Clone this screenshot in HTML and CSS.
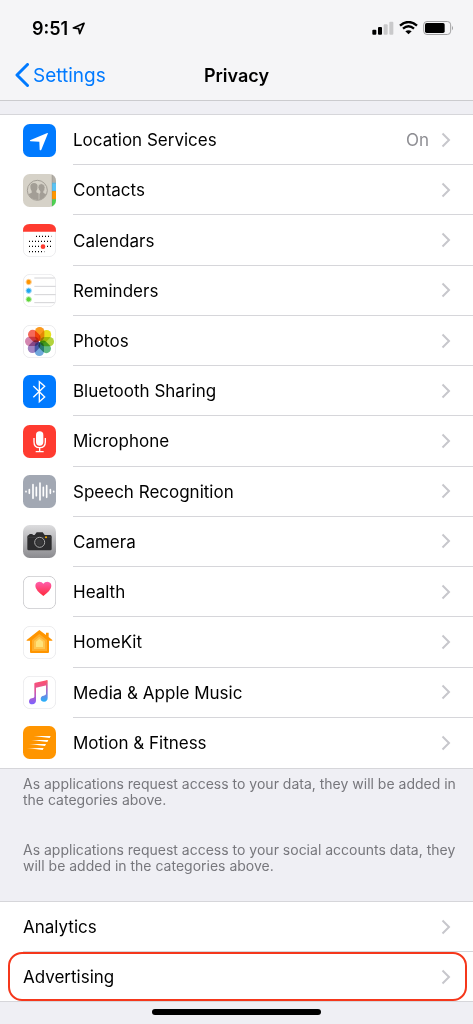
FILE: index.html
```html
<!DOCTYPE html>
<html lang="en">
<head>
    <meta charset="UTF-8">
    <meta name="viewport" content="width=device-width, initial-scale=1.0">
    <title>Privacy</title>
    <link rel="stylesheet" href="styles.css">
</head>
<body>
    <!-- Shared chevron -->
    <svg class="defs" width="0" height="0" aria-hidden="true">
        <symbol id="chevron" viewBox="0 0 10 16">
            <path d="M1.500 1.500 8 8l-6.500 6.500" fill="none" stroke="#c7c7cc" stroke-width="2"/>
        </symbol>
    </svg>

    <header class="top">
        <div class="status">
            <span class="time">9:51</span>
            <svg class="locate" width="13" height="13" viewBox="0 0 39 39" aria-hidden="true">
                <path d="M36 4 4 18l16 2 3 15z" fill="none" stroke="#000" stroke-width="5" stroke-linejoin="round"/>
            </svg>
            <svg class="signal" width="22" height="14" viewBox="0 0 66 42" aria-hidden="true">
                <rect x="1" y="26" width="12" height="15" rx="3"/>
                <rect x="18" y="18" width="12" height="23" rx="3"/>
                <rect x="35" y="10" width="12" height="31" rx="3" fill="#c9c9cb"/>
                <rect x="52" y="2" width="12" height="39" rx="3" fill="#c9c9cb"/>
            </svg>
            <svg class="wifi" width="19" height="14" viewBox="0 0 57 42" aria-hidden="true">
                <path d="M3 14q25.500-22 51 0M12 23q16.500-14 33 0" fill="none" stroke="#000" stroke-width="7"/>
                <path d="M19 31q9.500-7 19 0l-9.500 9z"/>
            </svg>
            <svg class="battery" width="31" height="14" viewBox="0 0 93 42" aria-hidden="true">
                <rect x="2" y="1.500" width="81" height="39" rx="10" fill="none" stroke="#a0a0a2" stroke-width="3"/>
                <rect x="6" y="6" width="59" height="30" rx="5"/>
                <path d="M87 14q6 7 0 14z" fill="#a0a0a2"/>
            </svg>
        </div>
        <nav class="bar">
            <a class="back" href="#">
                <svg width="14" height="24" viewBox="0 0 14 24" aria-hidden="true">
                    <path d="M12.500 1.500 2 12l10.500 10.500" fill="none" stroke="#007aff" stroke-width="3" stroke-linecap="round" stroke-linejoin="round"/>
                </svg>
                Settings
            </a>
            <h1>Privacy</h1>
        </nav>
    </header>

    <main>
        <section class="group group-access">
            <a class="row" href="#">
                <svg class="icon" viewBox="0 0 99 99" aria-hidden="true">
                    <rect width="99" height="99" rx="20" fill="#007aff"/>
                    <path d="M73 27 21 49q-1 3 2 3l26 1 1 24q2 4 5 0l20-49z" fill="#fff"/>
                </svg>
                <span class="cell"><span class="label">Location Services</span><span class="value">On</span><svg class="chevron"><use href="#chevron"/></svg></span>
            </a>
            <a class="row" href="#">
                <svg class="icon" viewBox="0 0 99 99" aria-hidden="true">
                    <clipPath id="tile"><rect width="99" height="99" rx="20"/></clipPath>
                    <g clip-path="url(#tile)">
                        <rect width="99" height="99" fill="#d6d2c8"/>
                        <rect x="87" width="12" height="26" fill="#b3afa8"/>
                        <rect x="87" y="26" width="12" height="25" fill="#5ac3f5"/>
                        <rect x="87" y="51" width="12" height="25" fill="#ff9500"/>
                        <rect x="87" y="76" width="12" height="23" fill="#4cd351"/>
                        <path d="M87 0v99M87 27h12M87 51h12M87 76h12" stroke="#6d6a60" stroke-width="2" opacity=".4"/>
                    </g>
                    <clipPath id="face"><circle cx="43" cy="49" r="29"/></clipPath>
                    <g clip-path="url(#face)" fill="#a39e96">
                        <path d="M22 38q0-11 11-11t11 11q0 8-4 13v4l14 7v20H8V64l18-8v-5q-4-4-4-13z"/>
                        <path d="M45 40q0-11 10-11t11 11q0 8-4 12v4l17 8v17H48V60l3-4v-4q-5-5-6-12z" stroke="#d6d2c8" stroke-width="2"/>
                    </g>
                    <circle cx="43" cy="49" r="30" fill="none" stroke="#a39e96" stroke-width="3"/>
                </svg>
                <span class="cell"><span class="label">Contacts</span><svg class="chevron"><use href="#chevron"/></svg></span>
            </a>
            <a class="row" href="#">
                <svg class="icon" viewBox="0 0 99 99" aria-hidden="true">
                    <rect x="1" y="1" width="97" height="97" rx="20" fill="#fff" stroke="#e3e3e5" stroke-width="2"/>
                    <path d="M0 23v-3Q0 0 20 0h59q20 0 20 20v3z" fill="#ff3b30"/>
                    <path d="M39 37h46M18 52h67M18 67h67M18 83h46" stroke="#000" stroke-width="4" stroke-dasharray="3 6"/>
                    <circle cx="60" cy="68" r="7" fill="#ff3b30"/>
                </svg>
                <span class="cell"><span class="label">Calendars</span><svg class="chevron"><use href="#chevron"/></svg></span>
            </a>
            <a class="row" href="#">
                <svg class="icon" viewBox="0 0 99 99" aria-hidden="true">
                    <rect x="1" y="1" width="97" height="97" rx="20" fill="#fff" stroke="#e3e3e5" stroke-width="2"/>
                    <path d="M34 12h61M34 37h64M34 62h64M34 86h61" stroke="#d2d2d5" stroke-width="3"/>
                    <g stroke-width="3">
                        <circle cx="17" cy="24" r="8" fill="#ff9500" stroke="#ffd49b"/>
                        <circle cx="17" cy="50" r="8" fill="#1ea7f0" stroke="#a8dcf8"/>
                        <circle cx="17" cy="76" r="8" fill="#5fd53a" stroke="#c0efae"/>
                    </g>
                </svg>
                <span class="cell"><span class="label">Reminders</span><svg class="chevron"><use href="#chevron"/></svg></span>
            </a>
            <a class="row" href="#">
                <svg class="icon" viewBox="0 0 99 99" aria-hidden="true">
                    <rect x="1" y="1" width="97" height="97" rx="20" fill="#fff" stroke="#e3e3e5" stroke-width="2"/>
                    <g class="petals">
                        <rect x="36" y="6" width="28" height="42" rx="14" fill="#fb9a1f"/>
                        <rect x="36" y="6" width="28" height="42" rx="14" fill="#e9e01c" transform="rotate(45 49.500 49.500)"/>
                        <rect x="36" y="6" width="28" height="42" rx="14" fill="#b2d33c" transform="rotate(90 49.500 49.500)"/>
                        <rect x="36" y="6" width="28" height="42" rx="14" fill="#5fba83" transform="rotate(135 49.500 49.500)"/>
                        <rect x="36" y="6" width="28" height="42" rx="14" fill="#70a8dc" transform="rotate(180 49.500 49.500)"/>
                        <rect x="36" y="6" width="28" height="42" rx="14" fill="#a184c2" transform="rotate(225 49.500 49.500)"/>
                        <rect x="36" y="6" width="28" height="42" rx="14" fill="#d386b0" transform="rotate(270 49.500 49.500)"/>
                        <rect x="36" y="6" width="28" height="42" rx="14" fill="#f5695a" transform="rotate(315 49.500 49.500)"/>
                    </g>
                </svg>
                <span class="cell"><span class="label">Photos</span><svg class="chevron"><use href="#chevron"/></svg></span>
            </a>
            <a class="row" href="#">
                <svg class="icon" viewBox="0 0 99 99" aria-hidden="true">
                    <rect width="99" height="99" rx="20" fill="#007aff"/>
                    <path d="M31 33 65 66 49 80V20l16 14-34 33" fill="none" stroke="#fff" stroke-width="4"/>
                </svg>
                <span class="cell"><span class="label">Bluetooth Sharing</span><svg class="chevron"><use href="#chevron"/></svg></span>
            </a>
            <a class="row" href="#">
                <svg class="icon" viewBox="0 0 99 99" aria-hidden="true">
                    <rect width="99" height="99" rx="20" fill="#ff3b30"/>
                    <rect x="39" y="19" width="22" height="43" rx="11" fill="#fff"/>
                    <path d="M33 39v12q0 17 17 17t17-17V39M50 68v11M38 80h24" fill="none" stroke="#fff" stroke-width="4"/>
                </svg>
                <span class="cell"><span class="label">Microphone</span><svg class="chevron"><use href="#chevron"/></svg></span>
            </a>
            <a class="row" href="#">
                <svg class="icon" viewBox="0 0 99 99" aria-hidden="true">
                    <rect width="99" height="99" rx="20" fill="#a2a8b3"/>
                    <path d="M9 49v1M19 44v11M30 29v41M40 37v25M51 24v51M61 37v25M71 32v35M82 44v11M92 49v1" stroke="#fff" stroke-width="5" stroke-linecap="round"/>
                </svg>
                <span class="cell"><span class="label">Speech Recognition</span><svg class="chevron"><use href="#chevron"/></svg></span>
            </a>
            <a class="row" href="#">
                <svg class="icon" viewBox="0 0 99 99" aria-hidden="true">
                    <linearGradient id="steel" x2="0" y2="1"><stop stop-color="#dcdcde"/><stop offset="1" stop-color="#8b8b8f"/></linearGradient>
                    <rect width="99" height="99" rx="20" fill="url(#steel)"/>
                    <path d="M13 35q0-4 5-5l2-3h8l2 3h5l6-8h18l6 8h17q4 1 4 5v37q0 4-4 4H17q-4 0-4-4z" fill="#2c2c2e"/>
                    <path d="M13 37h73" stroke="#48484a" stroke-width="2"/>
                    <circle cx="50" cy="52" r="15" fill="#2c2c2e" stroke="#aaa" stroke-width="3"/>
                    <circle cx="50" cy="52" r="10" fill="#38383a"/>
                    <circle cx="69" cy="37" r="3" fill="#ffb300"/>
                </svg>
                <span class="cell"><span class="label">Camera</span><svg class="chevron"><use href="#chevron"/></svg></span>
            </a>
            <a class="row" href="#">
                <svg class="icon" viewBox="0 0 99 99" aria-hidden="true">
                    <linearGradient id="pink" x2="0" y2="1"><stop stop-color="#ff5fae"/><stop offset="1" stop-color="#ff2a3c"/></linearGradient>
                    <rect x="1" y="1" width="97" height="97" rx="20" fill="#fff" stroke="#cfcfd2" stroke-width="3"/>
                    <path d="M61 60Q37 42 37 30q0-12 12-13 8 0 12 6 4-6 12-6 12 1 12 13 0 12-24 30z" fill="url(#pink)"/>
                </svg>
                <span class="cell"><span class="label">Health</span><svg class="chevron"><use href="#chevron"/></svg></span>
            </a>
            <a class="row" href="#">
                <svg class="icon" viewBox="0 0 99 99" aria-hidden="true">
                    <rect x="1" y="1" width="97" height="97" rx="20" fill="#fff" stroke="#e3e3e5" stroke-width="2"/>
                    <path d="M49 12 11 42v2h10v34q0 3 3 3h51q3 0 3-3V44h10v-2l-11-9V20h-8v7z" fill="#ff9500"/>
                    <path d="M49 24 27 42v33h45V42z" fill="#ffad2a"/>
                    <path d="M49 32 33 45v24h33V45z" fill="#ffc44d"/>
                    <path d="M49 39 39 47v16h21V47z" fill="#ffe27a"/>
                </svg>
                <span class="cell"><span class="label">HomeKit</span><svg class="chevron"><use href="#chevron"/></svg></span>
            </a>
            <a class="row" href="#">
                <svg class="icon" viewBox="0 0 99 99" aria-hidden="true">
                    <linearGradient id="note-left" gradientUnits="userSpaceOnUse" x1="0" y1="14" x2="0" y2="84"><stop stop-color="#ff4f6d"/><stop offset=".4" stop-color="#e0569a"/><stop offset="1" stop-color="#7d62ff"/></linearGradient>
                    <linearGradient id="note-right" gradientUnits="userSpaceOnUse" x1="0" y1="14" x2="0" y2="76"><stop stop-color="#fb5a68"/><stop offset=".5" stop-color="#a06ad0"/><stop offset="1" stop-color="#25b0fa"/></linearGradient>
                    <rect x="1" y="1" width="97" height="97" rx="20" fill="#fff" stroke="#e3e3e5" stroke-width="2"/>
                    <path d="M34 23q0-3 3-3l34-7v15l-32 7v38q0 11-11 12-9 0-10-8 0-9 9-10 7-1 7-5z" fill="url(#note-left)"/>
                    <path d="M69 13l5 0v52q0 11-11 12-9 0-10-8 0-9 9-10 7-1 7-5z" fill="url(#note-right)"/>
                </svg>
                <span class="cell"><span class="label">Media &amp; Apple Music</span><svg class="chevron"><use href="#chevron"/></svg></span>
            </a>
            <a class="row" href="#">
                <svg class="icon" viewBox="0 0 99 99" aria-hidden="true">
                    <linearGradient id="trail"><stop stop-color="#fff" stop-opacity=".4"/><stop offset=".5" stop-color="#fff"/></linearGradient>
                    <rect width="99" height="99" rx="20" fill="#ff9500"/>
                    <path d="M32 30h51l-3 6zM25 42h51l-3 6zM18 54h51l-3 6zM11 66h51l-3 6z" fill="url(#trail)"/>
                </svg>
                <span class="cell"><span class="label">Motion &amp; Fitness</span><svg class="chevron"><use href="#chevron"/></svg></span>
            </a>
        </section>

        <p class="note">As applications request access to your data, they will be added in the categories above.</p>
        <p class="note">As applications request access to your social accounts data, they will be added in the categories above.</p>

        <section class="group">
            <a class="row" href="#">
                <span class="cell"><span class="label">Analytics</span><svg class="chevron"><use href="#chevron"/></svg></span>
            </a>
            <a class="row marked" href="#">
                <span class="cell"><span class="label">Advertising</span><svg class="chevron"><use href="#chevron"/></svg></span>
            </a>
        </section>
    </main>

    <div class="home-bar"></div>
</body>
</html>
```

FILE: styles.css
```css
* {
    box-sizing: border-box;
}
body {
    margin: 0;
    background-color: #efeff4;
    color: #000;
    font-family: Inter, "Liberation Sans", sans-serif;
    font-size: 17px;
}
a {
    color: inherit;
    text-decoration: none;
}
svg {
    display: block;
    flex: none;
}
.defs {
    position: absolute;
}

/* Header */
.top {
    background-color: #f5f5f7;
    border-bottom: 1px solid #cbcbce;
}
.status {
    display: flex;
    align-items: center;
    height: 50px;
    padding: 6px 19px 0 32px;
}
.time {
    font-size: 18px;
    font-weight: 600;
}
.locate {
    margin-left: 4px;
}
.signal {
    margin-left: auto;
}
.wifi, .battery {
    margin-left: 5px;
}
.bar {
    display: grid;
    grid-template-columns: 1fr auto 1fr;
    align-items: center;
    height: 50px;
    padding: 0 15px;
}
.back {
    display: flex;
    align-items: center;
    gap: 4px;
    color: #007aff;
    font-size: 19px;
}
.bar h1 {
    margin: 0;
    font-size: 18px;
    font-weight: 600;
}

/* Lists */
.group {
    background-color: #fff;
    border-top: 1px solid #d6d6da;
    border-bottom: 1px solid #d6d6da;
}
.group-access {
    display: grid;
    grid-auto-rows: 1fr;
    min-height: 655px;
    margin-top: 13px;
}
.row {
    display: flex;
    align-items: center;
    gap: 17px;
    min-height: 50px;
    padding-left: 23px;
}
.row:last-child {
    min-height: 49px;
}
.icon {
    width: 33px;
    height: 33px;
}
.cell {
    display: flex;
    flex: 1;
    align-items: center;
    align-self: stretch;
    padding-right: 22px;
    border-bottom: 1px solid #d6d6da;
}
.row:last-child .cell {
    border-bottom: none;
}
.label, .value {
    padding-top: 1px;
}
.label {
    flex: 1;
}
.value {
    margin-right: 12px;
    color: #8e8e93;
}
.chevron {
    width: 10px;
    height: 16px;
}
.petals {
    isolation: isolate;
}
.petals rect {
    mix-blend-mode: multiply;
}
.marked {
    position: relative;
}
.marked::after {
    content: "";
    position: absolute;
    inset: 0 6px 0 8px;
    border: 2px solid #f5371b;
    border-radius: 14px;
}
.note {
    margin: 0;
    padding: 7px 16px 27px 23px;
    color: #77777c;
    font-size: 14px;
    line-height: 16px;
}

.home-bar {
    width: 169px;
    height: 6px;
    margin: 7px auto 9px;
    border-radius: 3px;
    background-color: #000;
}
```
